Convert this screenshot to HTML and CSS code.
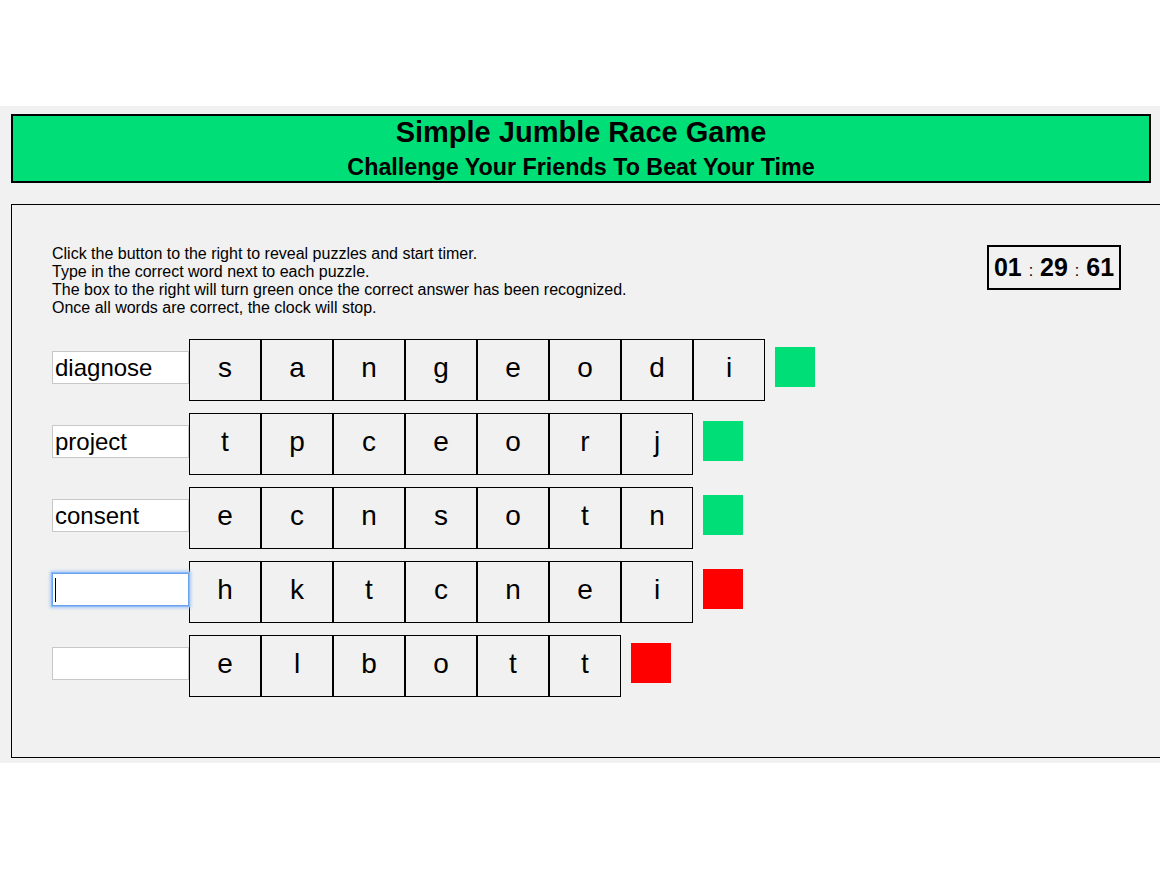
FILE: index.html
```html
<!DOCTYPE html>
<html>
<head>
<meta charset="utf-8">
<title>Simple Jumble Race Game</title>
<link rel="stylesheet" href="styles.css">
</head>
<body>
<div class="stage">
  <header class="banner">
    <h1 class="title">Simple Jumble Race Game</h1>
    <h2 class="subtitle">Challenge Your Friends To Beat Your Time</h2>
  </header>
  <main class="board">
    <div class="top">
      <div class="instructions">
        <p>Click the button to the right to reveal puzzles and start timer.</p>
        <p>Type in the correct word next to each puzzle.</p>
        <p>The box to the right will turn green once the correct answer has been recognized.</p>
        <p>Once all words are correct, the clock will stop.</p>
      </div>
      <div class="timer">01 <span class="colon">:</span> 29 <span class="colon">:</span> 61</div>
    </div>
    <div class="rows">
      <div class="row">
        <input class="answer" type="text" value="diagnose">
        <div class="tiles"><span class="tile">s</span><span class="tile">a</span><span class="tile">n</span><span class="tile">g</span><span class="tile">e</span><span class="tile">o</span><span class="tile">d</span><span class="tile">i</span></div>
        <span class="status ok"></span>
      </div>
      <div class="row">
        <input class="answer" type="text" value="project">
        <div class="tiles"><span class="tile">t</span><span class="tile">p</span><span class="tile">c</span><span class="tile">e</span><span class="tile">o</span><span class="tile">r</span><span class="tile">j</span></div>
        <span class="status ok"></span>
      </div>
      <div class="row">
        <input class="answer" type="text" value="consent">
        <div class="tiles"><span class="tile">e</span><span class="tile">c</span><span class="tile">n</span><span class="tile">s</span><span class="tile">o</span><span class="tile">t</span><span class="tile">n</span></div>
        <span class="status ok"></span>
      </div>
      <div class="row">
        <div class="field">
          <input class="answer focused" type="text" value="">
          <span class="caret"></span>
        </div>
        <div class="tiles"><span class="tile">h</span><span class="tile">k</span><span class="tile">t</span><span class="tile">c</span><span class="tile">n</span><span class="tile">e</span><span class="tile">i</span></div>
        <span class="status bad"></span>
      </div>
      <div class="row">
        <input class="answer" type="text" value="">
        <div class="tiles"><span class="tile">e</span><span class="tile">l</span><span class="tile">b</span><span class="tile">o</span><span class="tile">t</span><span class="tile">t</span></div>
        <span class="status bad"></span>
      </div>
    </div>
  </main>
</div>
</body>
</html>
```

FILE: styles.css
```css
html, body {
  margin: 0;
  padding: 0;
  background: #ffffff;
  font-family: "Liberation Sans", Arial, Helvetica, sans-serif;
  color: #000;
}

.stage {
  margin-top: 106px;
  background: #f1f1f1;
  padding: 8px 0 5px 0;
  overflow: hidden;
}

.banner {
  margin: 0 9px 0 11px;
  border: 2px solid #000;
  background: #00df77;
  text-align: center;
  height: 65px;
}

.title {
  margin: 0;
  font-size: 29px;
  line-height: 32px;
  font-weight: bold;
}

.subtitle {
  margin: 5px 0 0 0;
  font-size: 23.3px;
  line-height: 28px;
  font-weight: bold;
}

.board {
  margin: 21px 0 0 11px;
  width: 1180px;
  box-sizing: border-box;
  border: 1px solid #000;
  padding: 40px 69px 60px 40px;
}

.top {
  display: flex;
  justify-content: space-between;
  align-items: flex-start;
}

.instructions p {
  margin: 0;
  font-size: 16px;
  line-height: 18px;
}

.timer {
  margin-top: 0;
  width: 130px;
  height: 41px;
  border: 2px solid #000;
  text-align: center;
  font-size: 25px;
  font-weight: bold;
  line-height: 41px;
}

.colon {
  font-size: 16px;
  font-weight: normal;
}

.rows {
  margin-top: 22px;
  display: flex;
  flex-direction: column;
  gap: 12px;
}

.row {
  display: flex;
  align-items: flex-start;
}

.answer,
.field {
  margin-top: 12px;
}

.field {
  position: relative;
  width: 137px;
  height: 33px;
}

.field .answer {
  margin-top: 0;
}

.answer {
  width: 137px;
  height: 33px;
  box-sizing: border-box;
  border: 1px solid #c8c8c8;
  background: #fff;
  padding: 0 2px;
  font-family: "Liberation Sans", Arial, Helvetica, sans-serif;
  font-size: 24px;
  color: #000;
  outline: none;
}

.answer.focused {
  border-color: #6da3ee;
  box-shadow: 0 0 0 1px #8dbaf6, 0 0 3px 2px #a9cbf7;
}

.caret {
  position: absolute;
  left: 3px;
  top: 5px;
  width: 1px;
  height: 24px;
  background: #000;
}

.tiles {
  display: flex;
}

.tile {
  width: 70px;
  height: 56px;
  padding-bottom: 4px;
  border: 1px solid #000;
  display: flex;
  align-items: center;
  justify-content: center;
  font-size: 28px;
}

.status {
  width: 40px;
  height: 40px;
  margin: 8px 0 0 10px;
}

.status.ok {
  background: #00df77;
}

.status.bad {
  background: #ff0000;
}
```
